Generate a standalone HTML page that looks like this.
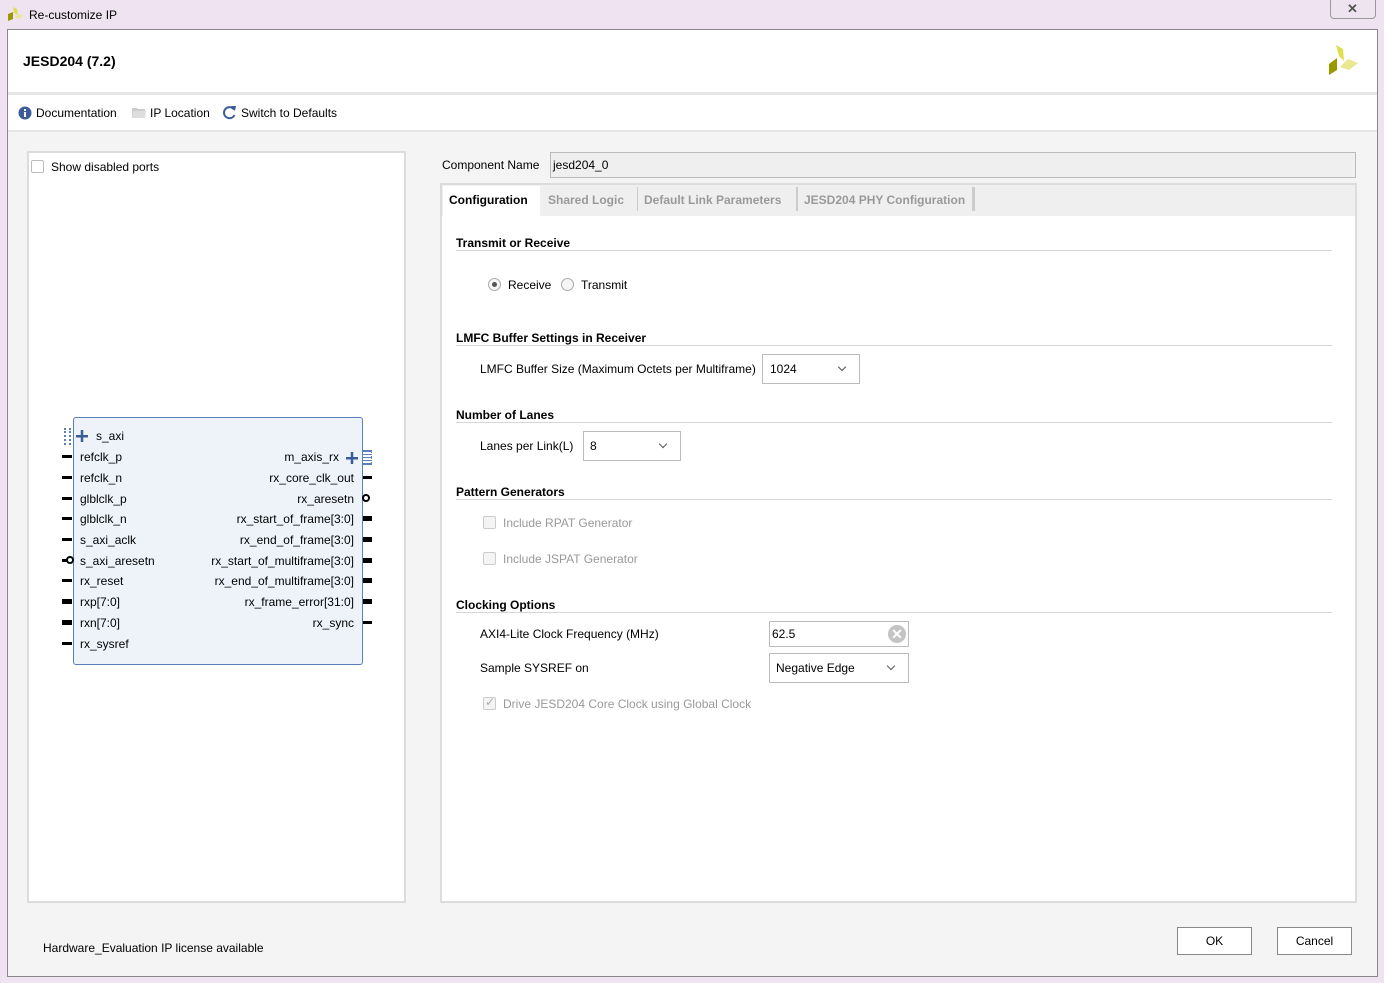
<!DOCTYPE html>
<html><head><meta charset="utf-8"><style>
*{margin:0;padding:0;box-sizing:border-box}
body{width:1384px;height:983px;position:relative;overflow:hidden;background:#efe3f1;font-family:"Liberation Sans",Arial,sans-serif;font-size:12px;color:#000}
.a{position:absolute}
.t{position:absolute;line-height:14px;white-space:nowrap}
.b{font-weight:bold}
.g{color:#999}
.sec{position:absolute;left:456px;width:876px;height:14px;border-bottom:1px solid #d6d6d6;font-weight:bold;line-height:12px}
.lp{position:absolute;left:62px;width:10px;height:3px;background:#000}
.rp{position:absolute;left:363px;width:9px;height:3px;background:#000}
.cb{position:absolute;width:13px;height:13px;border:1px solid #ccc;background:#f4f4f4;border-radius:2px}
.sel{position:absolute;border:1px solid #bbb;background:#fff}
.chev{position:absolute;width:6px;height:6px;border-right:1.5px solid #555;border-bottom:1.5px solid #555;transform:rotate(45deg)}
</style></head><body>
<!-- title bar -->
<svg class="a" style="left:6px;top:6px" width="18" height="16" viewBox="0 0 18 16"><polygon points="2,15 2,8 7,6 7,13" fill="#9a9a00"/><polygon points="7,1 11,3 12,9 8,7" fill="#dede50"/><polygon points="9,11 13,8 17,10 13,13" fill="#e8e890"/></svg>
<div class="t" style="left:29px;top:8px;font-size:12px">Re-customize IP</div>
<div class="a" style="left:1330px;top:0;width:46px;height:19px;border:1px solid #999;border-top:none;border-radius:0 0 4px 4px;background:#efe3f1"></div>
<div class="t" style="left:1347px;top:2px;font-size:13px;color:#555;font-weight:bold">✕</div>
<!-- main frame -->
<div class="a" style="left:7px;top:29px;width:1371px;height:948px;border:1px solid #888;background:#f4f4f4"></div>
<div class="a" style="left:8px;top:30px;width:1369px;height:62px;background:#fff"></div>
<div class="a" style="left:8px;top:92px;width:1369px;height:3px;background:#e6e6e6"></div>
<div class="t b" style="left:23px;top:54px;font-size:14px">JESD204 (7.2)</div>
<svg class="a" style="left:1326px;top:44px" width="34" height="34" viewBox="0 0 34 34"><polygon points="3,31 3,20 11,14 11,26" fill="#999900"/><polygon points="10,1 17,5 18,17 13,12" fill="#dede50"/><polygon points="14,23 22,15 32,19 23,26" fill="#e8e890"/></svg>
<div class="a" style="left:8px;top:95px;width:1369px;height:35px;background:#fff"></div>
<div class="a" style="left:8px;top:130px;width:1369px;height:2px;background:#e6e6e6"></div>
<svg class="a" style="left:18px;top:106px" width="14" height="14"><circle cx="7" cy="7" r="6.5" fill="#3b5c99"/><rect x="6" y="6" width="2" height="5" fill="#fff"/><rect x="6" y="3" width="2" height="2" fill="#fff"/></svg>
<div class="t" style="left:36px;top:106px">Documentation</div>
<svg class="a" style="left:132px;top:106px" width="15" height="13"><path d="M0 2h5l1 1h7v9H0z" fill="#ccc"/><path d="M1 5h13l-1 7H0z" fill="#ddd"/></svg>
<div class="t" style="left:150px;top:106px">IP Location</div>
<svg class="a" style="left:222px;top:105px" width="15" height="15" viewBox="0 0 15 15"><path d="M12 4.5A5.5 5.5 0 1 0 12.5 10" fill="none" stroke="#3b5c99" stroke-width="2"/><polygon points="9,1 14,1 13,6" fill="#3b5c99"/></svg>
<div class="t" style="left:241px;top:106px">Switch to Defaults</div>
<!-- left panel -->
<div class="a" style="left:27px;top:151px;width:379px;height:752px;border:2px solid #dcdcdc;background:#fff"></div>
<div class="cb" style="left:31px;top:160px;border-color:#bbb;background:#fff"></div>
<div class="t" style="left:51px;top:160px">Show disabled ports</div>
<div class="a" style="left:73px;top:417px;width:290px;height:248px;border:1px solid #5b7fb8;border-radius:3px;background:#eef3fa"></div>
<div class="a" style="left:64px;top:428px;width:7px;height:17px;border-left:2px dotted #5b7fb8;border-right:2px dotted #5b7fb8"></div>
<svg class="a" style="left:76px;top:430px" width="12" height="12"><rect x="0" y="5" width="12" height="2.5" fill="#3b5c99"/><rect x="4.75" y="0" width="2.5" height="12" fill="#3b5c99"/></svg>
<div class="t" style="left:96px;top:429px">s_axi</div>
<div class="lp" style="top:455px"></div><div class="t" style="left:80px;top:450px">refclk_p</div>
<div class="lp" style="top:476px"></div><div class="t" style="left:80px;top:471px">refclk_n</div>
<div class="lp" style="top:497px"></div><div class="t" style="left:80px;top:492px">glblclk_p</div>
<div class="lp" style="top:517px"></div><div class="t" style="left:80px;top:512px">glblclk_n</div>
<div class="lp" style="top:538px"></div><div class="t" style="left:80px;top:533px">s_axi_aclk</div>
<div class="lp" style="top:559px;width:5px"></div><div class="a" style="left:66px;top:556px;width:8px;height:8px;border:2px solid #000;border-radius:50%;background:#fff"></div><div class="t" style="left:80px;top:554px">s_axi_aresetn</div>
<div class="lp" style="top:579px"></div><div class="t" style="left:80px;top:574px">rx_reset</div>
<div class="lp" style="top:599px;height:5px"></div><div class="t" style="left:80px;top:595px">rxp[7:0]</div>
<div class="lp" style="top:620px;height:5px"></div><div class="t" style="left:80px;top:616px">rxn[7:0]</div>
<div class="lp" style="top:642px"></div><div class="t" style="left:80px;top:637px">rx_sysref</div>
<div class="t" style="right:1045px;top:450px">m_axis_rx</div>
<svg class="a" style="left:346px;top:452px" width="12" height="12"><rect x="0" y="5" width="12" height="2.5" fill="#3b5c99"/><rect x="4.75" y="0" width="2.5" height="12" fill="#3b5c99"/></svg>
<div class="a" style="left:362px;top:450px;width:10px;height:15px;border:1px dotted #5b7fb8;background:repeating-linear-gradient(#5b7fb8 0 1px,transparent 1px 3px)"></div>
<div class="rp" style="top:476px"></div><div class="t" style="right:1030px;top:471px">rx_core_clk_out</div>
<div class="a" style="left:362px;top:494px;width:8px;height:8px;border:2px solid #000;border-radius:50%;background:#fff"></div><div class="t" style="right:1030px;top:492px">rx_aresetn</div>
<div class="rp" style="top:516px;height:5px"></div><div class="t" style="right:1030px;top:512px">rx_start_of_frame[3:0]</div>
<div class="rp" style="top:537px;height:5px"></div><div class="t" style="right:1030px;top:533px">rx_end_of_frame[3:0]</div>
<div class="rp" style="top:558px;height:5px"></div><div class="t" style="right:1030px;top:554px">rx_start_of_multiframe[3:0]</div>
<div class="rp" style="top:578px;height:5px"></div><div class="t" style="right:1030px;top:574px">rx_end_of_multiframe[3:0]</div>
<div class="rp" style="top:599px;height:5px"></div><div class="t" style="right:1030px;top:595px">rx_frame_error[31:0]</div>
<div class="rp" style="top:621px"></div><div class="t" style="right:1030px;top:616px">rx_sync</div>
<!-- right side -->
<div class="t" style="left:442px;top:158px">Component Name</div>
<div class="a" style="left:550px;top:152px;width:806px;height:26px;border:1px solid #bbb;background:#efefef"></div>
<div class="t" style="left:553px;top:158px">jesd204_0</div>
<div class="a" style="left:440px;top:183px;width:917px;height:720px;border:2px solid #dcdcdc;background:#fff"></div>
<div class="a" style="left:442px;top:185px;width:913px;height:31px;background:#efefef"></div>
<div class="a" style="left:443px;top:186px;width:97px;height:30px;background:#fff"></div>
<div class="t b" style="left:449px;top:193px">Configuration</div>
<div class="t b g" style="left:548px;top:193px;color:#9a9a9a">Shared Logic</div>
<div class="a" style="left:637px;top:187px;width:1px;height:24px;background:#ccc"></div>
<div class="t b" style="left:644px;top:193px;color:#9a9a9a">Default Link Parameters</div>
<div class="a" style="left:796px;top:187px;width:2px;height:24px;background:#ccc"></div>
<div class="t b" style="left:804px;top:193px;color:#9a9a9a">JESD204 PHY Configuration</div>
<div class="a" style="left:972px;top:187px;width:3px;height:24px;background:#ccc"></div>

<div class="sec" style="top:237px">Transmit or Receive</div>
<div class="a" style="left:488px;top:278px;width:13px;height:13px;border:1px solid #aaa;border-radius:50%;background:#f6f6f6"></div>
<div class="a" style="left:492px;top:282px;width:5px;height:5px;border-radius:50%;background:#555"></div>
<div class="t" style="left:508px;top:278px">Receive</div>
<div class="a" style="left:561px;top:278px;width:13px;height:13px;border:1px solid #aaa;border-radius:50%;background:#f6f6f6"></div>
<div class="t" style="left:581px;top:278px">Transmit</div>

<div class="sec" style="top:332px">LMFC Buffer Settings in Receiver</div>
<div class="t" style="left:480px;top:362px">LMFC Buffer Size (Maximum Octets per Multiframe)</div>
<div class="sel" style="left:762px;top:354px;width:98px;height:30px"></div>
<div class="t" style="left:770px;top:362px">1024</div>
<div class="chev" style="left:839px;top:364px"></div>

<div class="sec" style="top:409px">Number of Lanes</div>
<div class="t" style="left:480px;top:439px">Lanes per Link(L)</div>
<div class="sel" style="left:583px;top:431px;width:98px;height:30px"></div>
<div class="t" style="left:590px;top:439px">8</div>
<div class="chev" style="left:660px;top:441px"></div>

<div class="sec" style="top:486px">Pattern Generators</div>
<div class="cb" style="left:483px;top:516px"></div>
<div class="t g" style="left:503px;top:516px">Include RPAT Generator</div>
<div class="cb" style="left:483px;top:552px"></div>
<div class="t g" style="left:503px;top:552px">Include JSPAT Generator</div>

<div class="sec" style="top:599px">Clocking Options</div>
<div class="t" style="left:480px;top:627px">AXI4-Lite Clock Frequency (MHz)</div>
<div class="sel" style="left:769px;top:621px;width:140px;height:26px"></div>
<div class="t" style="left:772px;top:627px">62.5</div>
<div class="a" style="left:888px;top:625px;width:18px;height:18px;border-radius:50%;background:#c4c4c4;color:#fff;font-size:14px;line-height:18px;text-align:center;font-weight:bold">✕</div>
<div class="t" style="left:480px;top:661px">Sample SYSREF on</div>
<div class="sel" style="left:769px;top:653px;width:140px;height:30px"></div>
<div class="t" style="left:776px;top:661px">Negative Edge</div>
<div class="chev" style="left:888px;top:663px"></div>
<div class="cb" style="left:483px;top:697px"></div>
<div class="t" style="left:485px;top:695px;color:#aaa;font-size:12px">✓</div>
<div class="t g" style="left:503px;top:697px">Drive JESD204 Core Clock using Global Clock</div>
<!-- bottom -->
<div class="t" style="left:43px;top:941px">Hardware_Evaluation IP license available</div>
<div class="a" style="left:1177px;top:927px;width:75px;height:28px;border:1px solid #888;background:#fff;text-align:center;line-height:26px">OK</div>
<div class="a" style="left:1277px;top:927px;width:75px;height:28px;border:1px solid #888;background:#fff;text-align:center;line-height:26px">Cancel</div>
</body></html>
